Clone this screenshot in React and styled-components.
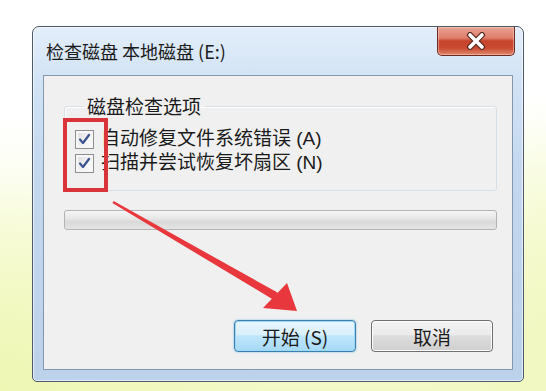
import React from "react";
import styled, { createGlobalStyle } from "styled-components";

const GlobalStyle = createGlobalStyle`
  html, body {
    margin: 0;
    padding: 0;
  }
  body {
    width: 546px;
    height: 391px;
    overflow: hidden;
    font-family: "Noto Sans CJK SC", "Noto Sans", sans-serif;
  }
`;

const CheckMark = () => (
  <svg width="13" height="13" viewBox="0 0 13 13">
    <path
      d="M2 6.5 L5 10 L11 2"
      fill="none"
      stroke="#3d5290"
      strokeWidth="2.2"
      strokeLinecap="round"
      strokeLinejoin="round"
    />
  </svg>
);

const CloseGlyph = () => (
  <svg width="22" height="18" viewBox="0 0 22 18">
    <path
      d="M5 3 L17 15 M17 3 L5 15"
      fill="none"
      stroke="#5a2a22"
      strokeWidth="6"
      strokeLinecap="round"
    />
    <path
      d="M5 3 L17 15 M17 3 L5 15"
      fill="none"
      stroke="#ffffff"
      strokeWidth="3.6"
      strokeLinecap="round"
    />
  </svg>
);

// red marks drawn over the screenshot
const Annotations = () => (
  <Overlay width="546" height="391" viewBox="0 0 546 391">
    <rect
      x="65"
      y="120"
      width="41"
      height="70"
      fill="none"
      stroke="#d8343a"
      strokeWidth="4"
    />
    <polygon
      points="112.4,202.9 113.6,201.1 277.5,292.5 273,299.5"
      fill="#e8383d"
    />
    <polygon points="297,311 263,308 287,283" fill="#e8383d" />
  </Overlay>
);

const App = () => {
  return (
    <Page>
      <GlobalStyle />
      <Window>
        <TitleBar>
          <Title>检查磁盘 本地磁盘 (E:)</Title>
          <CloseButton>
            <CloseGlyph />
          </CloseButton>
        </TitleBar>
        <Panel>
          <Group>
            <Legend>磁盘检查选项</Legend>
            <Option>
              <Box>
                <CheckMark />
              </Box>
              <Label>自动修复文件系统错误 (A)</Label>
            </Option>
            <Option>
              <Box>
                <CheckMark />
              </Box>
              <Label>扫描并尝试恢复坏扇区 (N)</Label>
            </Option>
          </Group>
          <Progress />
          <Buttons>
            <Button $primary>开始 (S)</Button>
            <Button>取消</Button>
          </Buttons>
        </Panel>
      </Window>
      <Annotations />
    </Page>
  );
};

const Page = styled.div`
  position: relative;
  width: 546px;
  height: 391px;
  box-sizing: border-box;
  padding: 26px 0 0 32px;
  background:
    radial-gradient(ellipse 260px 220px at 0% 100%, #eef7b4 0%, rgba(238, 247, 180, 0) 100%),
    radial-gradient(ellipse 120px 260px at 100% 90%, #f1f8c0 0%, rgba(241, 248, 192, 0) 100%),
    linear-gradient(180deg, #ffffff 0%, #ffffff 30%, #fafde4 60%, #f3f9c6 100%);
`;

const Overlay = styled.svg`
  position: absolute;
  left: 0;
  top: 0;
  pointer-events: none;
`;

const Window = styled.div`
  width: 492px;
  height: 356px;
  box-sizing: border-box;
  display: flex;
  flex-direction: column;
  border: 1px solid #4d5968;
  border-radius: 7px 7px 5px 5px;
  padding: 0 10px 11px 10px;
  background: linear-gradient(
    180deg,
    #e3eefa 0%,
    #d2e3f5 15%,
    #c3d8ef 40%,
    #bcd2ea 100%
  );
  box-shadow: inset 0 0 0 1px rgba(255, 255, 255, 0.6);
`;

const TitleBar = styled.div`
  height: 48px;
  display: flex;
  justify-content: space-between;
  align-items: flex-start;
`;

const Title = styled.div`
  padding: 12px 0 0 3px;
  font-size: 18px;
  line-height: 24px;
  color: #1a1a1a;
`;

const CloseButton = styled.div`
  width: 78px;
  height: 29px;
  margin-right: -2px;
  box-sizing: border-box;
  display: flex;
  align-items: center;
  justify-content: center;
  border: 1px solid #6b2b21;
  border-top: none;
  border-radius: 0 0 5px 5px;
  background: linear-gradient(
    180deg,
    #e9a596 0%,
    #dd7b68 40%,
    #c7432c 50%,
    #c94a31 75%,
    #e08a6c 100%
  );
  box-shadow: inset 0 0 0 1px rgba(255, 210, 200, 0.5);
`;

const Panel = styled.div`
  flex: 1;
  display: flex;
  flex-direction: column;
  box-sizing: border-box;
  border: 1px solid #8497ad;
  background: #f0f0f0;
  padding: 19px 15px 17px 20px;
`;

const Group = styled.fieldset`
  margin: 0;
  padding: 10px 10px 15px 10px;
  border: 1px solid #d5dfe5;
  border-radius: 3px;
  box-shadow: inset 1px 1px 0 #ffffff;
  display: flex;
  flex-direction: column;
`;

const Legend = styled.legend`
  padding: 0 4px;
  margin-left: 8px;
  font-size: 19px;
  line-height: 22px;
  color: #1a1a1a;
`;

const Option = styled.div`
  height: 24px;
  display: flex;
  align-items: center;
  gap: 7px;
`;

const Label = styled.span`
  font-family: "Liberation Sans", "Noto Sans CJK SC", sans-serif;
  font-size: 19px;
  line-height: 24px;
  color: #1a1a1a;
  white-space: nowrap;
`;

const Box = styled.span`
  width: 19px;
  height: 19px;
  flex-shrink: 0;
  box-sizing: border-box;
  display: flex;
  align-items: center;
  justify-content: center;
  border: 1px solid #8e8f8f;
  background: linear-gradient(135deg, #dcdcdc 0%, #f4f4f4 60%, #ffffff 100%);
  box-shadow: inset 0 0 0 2px #f6f6f6;
`;

const Progress = styled.div`
  margin-top: 19px;
  height: 20px;
  box-sizing: border-box;
  border: 1px solid #b3b3b3;
  border-radius: 3px;
  background: linear-gradient(
    180deg,
    #f5f5f5 0%,
    #e8e8e8 40%,
    #d9d9d9 60%,
    #e4e4e4 100%
  );
`;

const Buttons = styled.div`
  margin-top: auto;
  display: flex;
  justify-content: flex-end;
  gap: 15px;
  padding-right: 4px;
`;

const Button = styled.button`
  width: 122px;
  height: 32px;
  box-sizing: border-box;
  border-radius: 4px;
  font-family: "Noto Sans CJK SC", "Noto Sans", sans-serif;
  font-size: 19px;
  line-height: 1;
  color: #1a1a1a;
  padding: 0;
  border: 1px solid ${(p) => (p.$primary ? "#3c7fb1" : "#707070")};
  background: ${(p) =>
    p.$primary
      ? "linear-gradient(180deg, #eaf6fd 0%, #d9f0fc 45%, #bee6fd 50%, #a7d9f5 100%)"
      : "linear-gradient(180deg, #f2f2f2 0%, #ebebeb 45%, #dddddd 50%, #cfcfcf 100%)"};
  box-shadow: ${(p) =>
    p.$primary
      ? "inset 0 0 0 1px #9cd8f4, 0 0 2px #5fb4e0"
      : "inset 0 0 0 1px #fcfcfc"};
`;

export default App;
